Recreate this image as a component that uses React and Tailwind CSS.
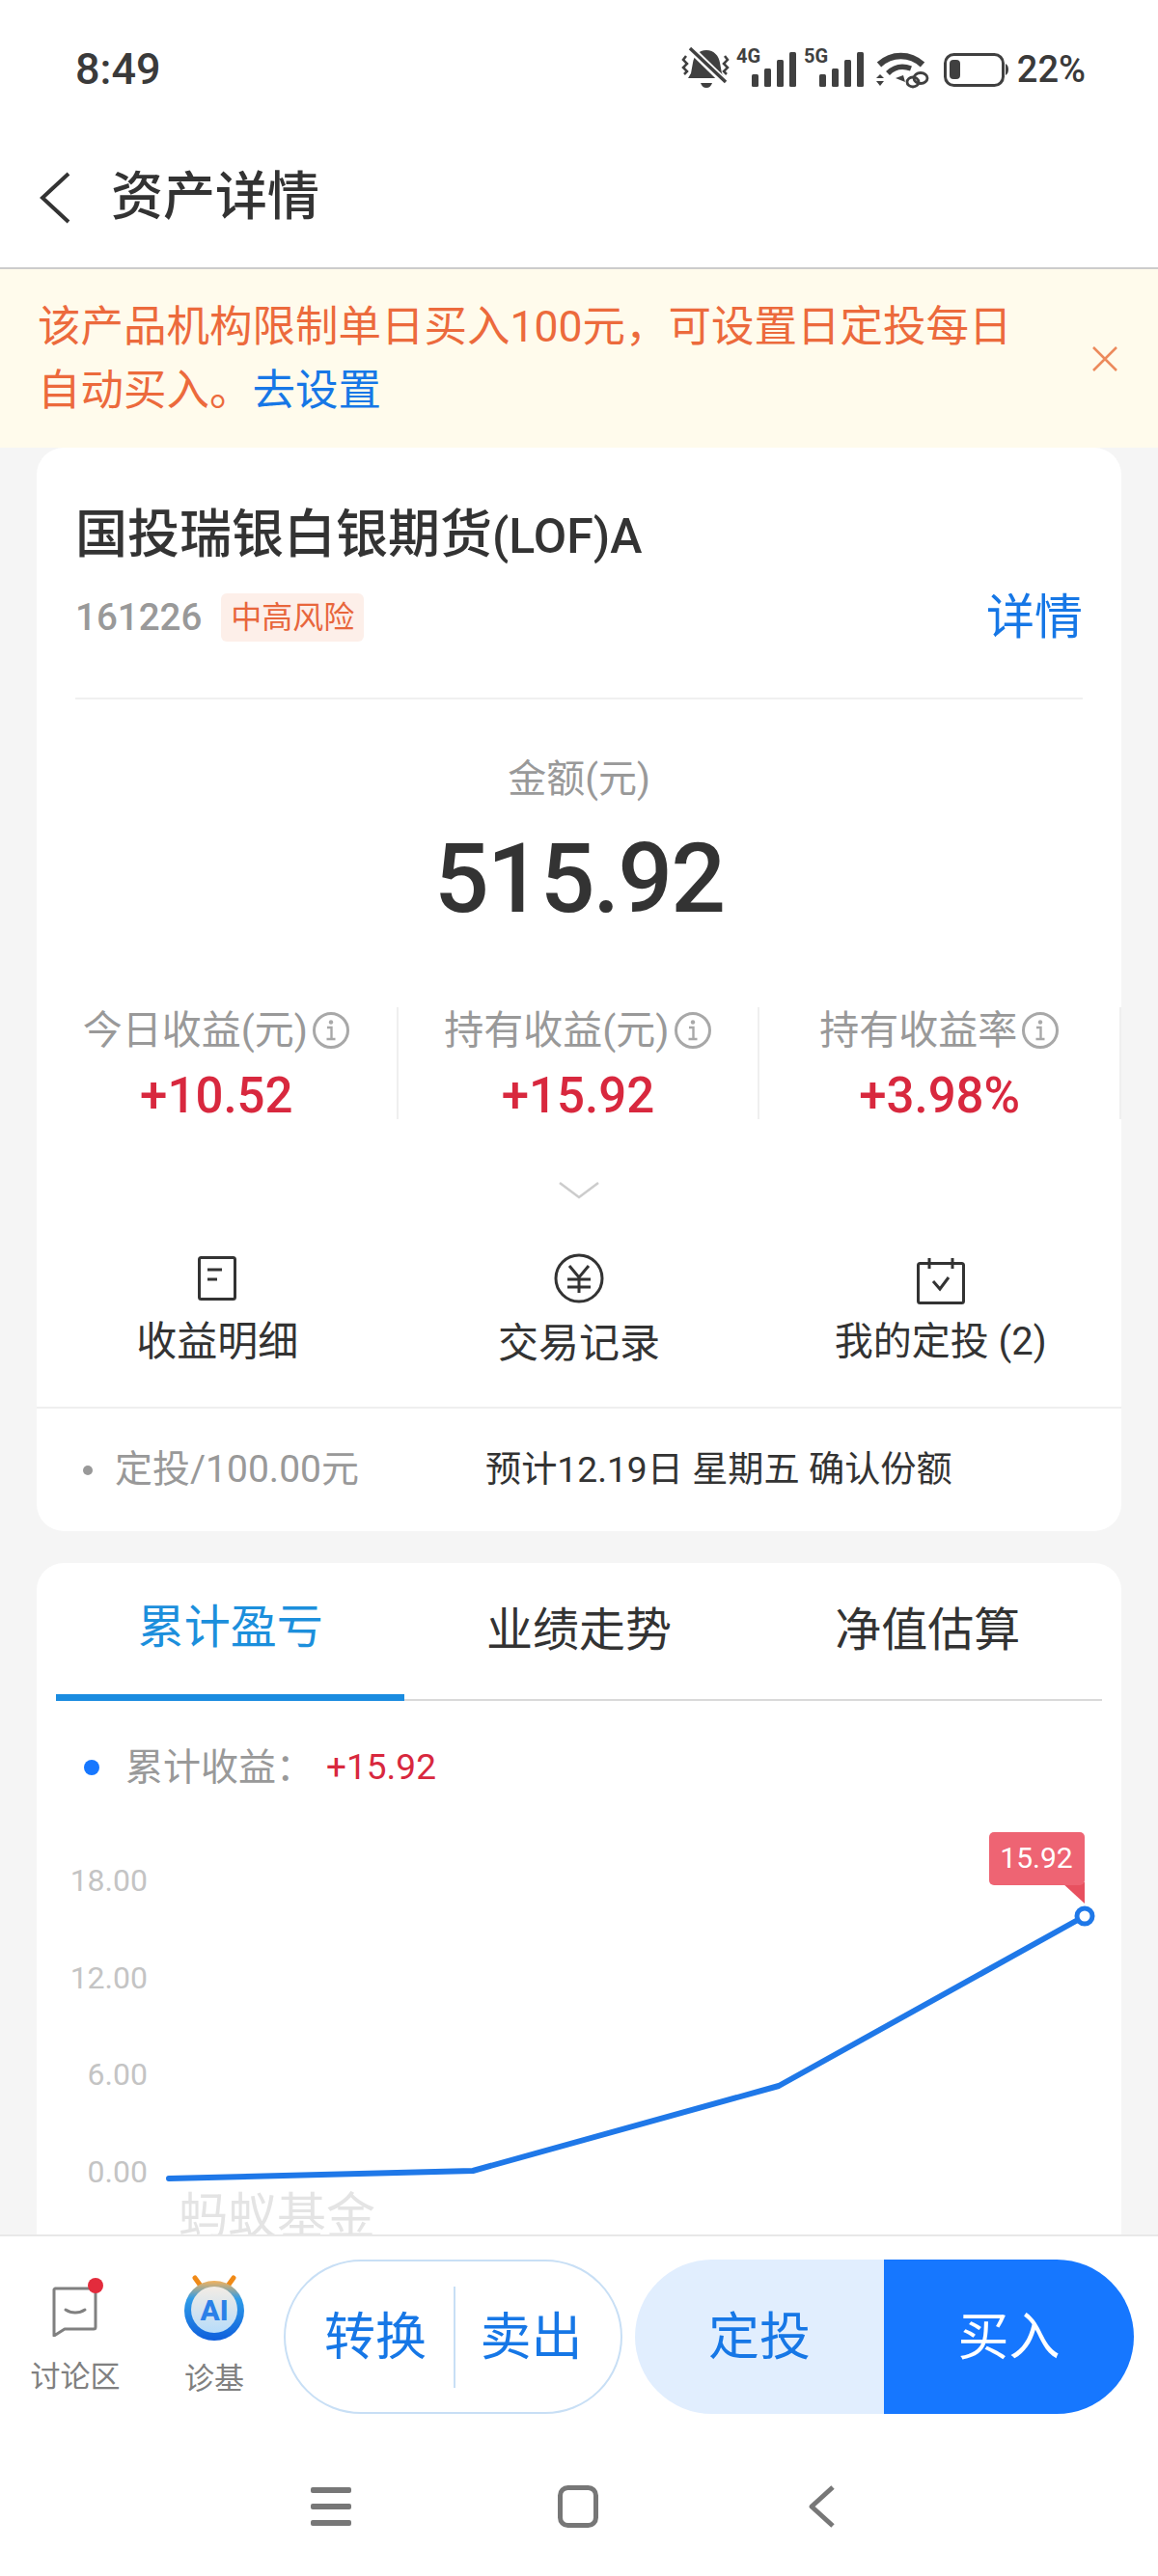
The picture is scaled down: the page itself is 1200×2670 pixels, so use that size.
const font = { fontFamily: '"Roboto", "Noto Sans CJK SC", sans-serif' };

function Bars({ x }) {
  return (
    <>
      <rect x={x} y="37" width="7" height="13" rx="1.5" />
      <rect x={x + 13} y="31" width="7" height="19" rx="1.5" />
      <rect x={x + 26} y="22" width="7" height="28" rx="1.5" />
      <rect x={x + 39} y="14" width="7" height="36" rx="1.5" />
    </>
  );
}

function StatusIcons() {
  return (
    <svg width="350" height="60" viewBox="0 0 350 60" fill="#404040" className="-mt-[4px]">
      {/* muted bell */}
      <path d="M30 12c8 0 13 6 14 13l2 11 3 5H11l3-5 2-11c1-7 6-13 14-13z" />
      <path d="M24 46h12c-1 3-3 5-6 5s-5-2-6-5z" />
      <path d="M11 8l40 39" stroke="#fff" strokeWidth="8" />
      <path d="M13 10l37 35" stroke="#404040" strokeWidth="3.5" />
      <path d="M9 18l-3 4 4 4-4 4 4 4-3 3M49 18l3 4-4 4 4 4-4 4 3 3" fill="none" stroke="#404040" strokeWidth="2.5" />
      {/* 4G */}
      <text x="61" y="25" fontSize="20" fontWeight="700" fontFamily="Roboto">4G</text>
      <Bars x={77} />
      {/* 5G */}
      <text x="131" y="25" fontSize="20" fontWeight="700" fontFamily="Roboto">5G</text>
      <Bars x={147} />
      {/* wifi */}
      <path d="M209 27c13-12 32-12 45 0" fill="none" stroke="#404040" strokeWidth="6.5" />
      <path d="M218 36c7-7 16-8 24-5" fill="none" stroke="#404040" strokeWidth="5.5" />
      <path d="M226 41l8-3 2 7z" />
      <path d="M210 37l4 4h-8zM206 44h8l-4 5z" />
      <ellipse cx="244" cy="45" rx="6" ry="5" fill="none" stroke="#404040" strokeWidth="2.8" />
      <ellipse cx="252" cy="41" rx="7" ry="5.5" fill="none" stroke="#404040" strokeWidth="2.8" />
      {/* battery */}
      <rect x="277.5" y="16.5" width="60" height="32" rx="9" fill="none" stroke="#404040" strokeWidth="3" />
      <rect x="282" y="22" width="11" height="20" rx="4" />
      <path d="M340 26c2 1 3 3 3 6s-1 5-3 6z" />
    </svg>
  );
}

function InfoIcon() {
  return (
    <svg width="40" height="40" viewBox="0 0 40 40" fill="none">
      <circle cx="20" cy="20" r="17.5" stroke="#a8a8a8" strokeWidth="3" />
      <circle cx="20" cy="11.5" r="2.2" fill="#a8a8a8" />
      <path d="M16 17h4.5v12M15.5 29h9" stroke="#a8a8a8" strokeWidth="2.4" />
    </svg>
  );
}

function Stat({ label, value }) {
  return (
    <div className="h-[116px] flex flex-col items-center border-r-2 border-[#efefef]">
      <div className="flex items-center gap-[4px] h-[48px] text-[41px] leading-[48px] text-[#999999]">
        <span>{label}</span>
        <InfoIcon />
      </div>
      <div className="mt-[14px] text-[51px] leading-[60px] font-medium text-[#d8283e]">{value}</div>
    </div>
  );
}

function Action({ icon, label, textClass }) {
  return (
    <div className="flex flex-col items-center">
      <div className="h-[52px] flex items-center justify-center">{icon}</div>
      <div className={"text-[#333333] text-[42px] leading-[56px] " + textClass}>{label}</div>
    </div>
  );
}

export default function App() {
  return (
    <div className="w-[1200px] h-[2670px] flex flex-col bg-white overflow-hidden" style={font}>
      {/* status bar */}
      <div className="h-[120px] shrink-0 flex items-start justify-between pl-[78px] pr-[75px] pt-[47px] text-[#3a3a3a]">
        <div className="text-[45px] leading-[50px] font-medium">8:49</div>
        <div className="flex items-center gap-[2px] h-[50px]">
          <StatusIcons />
          <span className="text-[38px] leading-[50px] font-medium">22%</span>
        </div>
      </div>

      {/* header */}
      <div className="h-[159px] shrink-0 flex items-center pl-[40px] pt-[13px] border-b-2 border-[#cccccc]">
        <svg width="34" height="54" viewBox="0 0 34 54" fill="none">
          <path d="M31 2L4 27l27 25" stroke="#333333" strokeWidth="4" />
        </svg>
        <div className="ml-[41px] text-[54px] leading-[66px] font-medium text-[#333333]">资产详情</div>
      </div>

      {/* notice */}
      <div className="h-[185px] shrink-0 bg-[#fffbec] flex items-center pl-[39px] pr-[41px] justify-between">
        <div className="w-[1070px] text-[44.5px] leading-[66px] text-[#ec6a3c]">
          该产品机构限制单日买入100元，可设置日定投每日
          <br />
          自动买入。<span className="text-[#1677e6]">去设置</span>
        </div>
        <svg width="28" height="28" viewBox="0 0 28 28" fill="none">
          <path d="M2 2l24 24M26 2L2 26" stroke="#ec8a5c" strokeWidth="2.5" />
        </svg>
      </div>

      <div className="flex-1 min-h-0 overflow-hidden bg-[#f5f5f5] px-[38px]">
        {/* asset card */}
        <div className="bg-white rounded-[28px] h-[1123px] flex flex-col">
          <div className="pt-[58px] px-[40px]">
            <div className="text-[54px] leading-[66px] text-[#333333] font-medium">
              国投瑞银白银期货<span className="text-[50px]">(LOF)A</span>
            </div>
            <div className="mt-[25px] h-[52px] flex items-center">
              <span className="text-[38.5px] font-medium text-[#999999]">161226</span>
              <span className="ml-[20px] h-[50px] px-[10px] rounded-[6px] bg-[#fdefe9] text-[#e8663c] text-[32px] leading-[50px]">中高风险</span>
              <span className="ml-auto text-[50px] leading-[60px] text-[#1677e6]">详情</span>
            </div>
            <div className="mt-[57px] border-b-2 border-[#f0f0f0]" />
          </div>

          <div className="mt-[58px] text-center text-[40px] leading-[50px] text-[#999999]">金额(元)</div>
          <div className="mt-[23px] text-center text-[100px] leading-[110px] tracking-[-2px] font-medium text-[#333333]">515.92</div>

          <div className="mt-[78px] grid grid-cols-3">
            <Stat label="今日收益(元)" value="+10.52" />
            <Stat label="持有收益(元)" value="+15.92" />
            <Stat label="持有收益率" value="+3.98%" />
          </div>

          <div className="mt-[65px] flex justify-center">
            <svg width="42" height="18" viewBox="0 0 42 18" fill="none">
              <path d="M1 1l20 15L41 1" stroke="#cccccc" strokeWidth="2.5" />
            </svg>
          </div>

          <div className="mt-[56px] grid grid-cols-3">
            <Action
              label="收益明细"
              textClass="mt-[12px]"
              icon={
                <svg width="40" height="46" viewBox="0 0 40 46" fill="none" stroke="#333333">
                  <rect x="1.5" y="1.5" width="37" height="43" rx="2" strokeWidth="3" />
                  <path d="M10 14h15M10 24h10" strokeWidth="3" />
                </svg>
              }
            />
            <Action
              label="交易记录"
              textClass="mt-[14px]"
              icon={
                <svg width="52" height="52" viewBox="0 0 52 52" fill="none" stroke="#333333">
                  <circle cx="26" cy="26" r="24" strokeWidth="3" />
                  <path d="M16 13l10 12 10-12M14 27h24M14 35h24M26 25v16" strokeWidth="3" />
                </svg>
              }
            />
            <Action
              label="我的定投 (2)"
              textClass="mt-[12px] !text-[40px]"
              icon={
                <svg width="50" height="50" viewBox="0 0 50 50" fill="none" stroke="#333333" className="mt-[6px]">
                  <rect x="1.5" y="6.5" width="47" height="41" rx="2" strokeWidth="3" />
                  <path d="M13 1v11M37 1v11" strokeWidth="3" />
                  <path d="M17 25l7 8 9-12" strokeWidth="3" />
                </svg>
              }
            />
          </div>

          <div className="mt-[37px] border-b-2 border-[#efefef]" />

          <div className="flex-1 flex items-center">
            <span className="ml-[48px] w-[10px] h-[10px] rounded-full bg-[#999999]" />
            <span className="ml-[23px] text-[39px] text-[#999999]">定投/100.00元</span>
            <span className="ml-[131px] text-[37.2px] text-[#333333]">预计12.19日 星期五 确认份额</span>
          </div>
        </div>

        {/* chart card */}
        <div className="mt-[33px] bg-white rounded-t-[28px] h-[760px] relative">
          <div className="mx-[20px] h-[143px] grid grid-cols-3 border-b-2 border-[#d9d9d9]">
            <div className="h-[143px] border-b-[7px] border-[#1a8ce0] flex items-center justify-center pb-[2px] text-[48px] text-[#1c8fdc]">累计盈亏</div>
            <div className="flex items-center justify-center pb-[3px] text-[48px] text-[#333333]">业绩走势</div>
            <div className="flex items-center justify-center pb-[3px] text-[48px] text-[#333333]">净值估算</div>
          </div>

          <div className="mt-[41px] flex items-center pl-[49px] h-[56px]">
            <span className="w-[16px] h-[16px] rounded-full bg-[#1677ff]" />
            <span className="ml-[27px] text-[39px] text-[#999999]">累计收益：</span>
            <span className="ml-[13px] text-[37px] text-[#d8283e]">+15.92</span>
          </div>

          <svg width="1124" height="470" viewBox="0 0 1124 470" className="block mt-[1px]" fill="none" style={font}>
            {["18.00", "12.00", "6.00", "0.00"].map((t, i) => (
              <text key={t} x="115" y={99 + i * 100.5} textAnchor="end" fontSize="32" fill="#c4c4c4">{t}</text>
            ))}
            <path d="M137 397L452 389L769 301L1086 125" stroke="#1f78e8" strokeWidth="6" strokeLinejoin="round" strokeLinecap="round" />
            <circle cx="1086" cy="125" r="8" fill="#fff" stroke="#1f78e8" strokeWidth="5" />
            <path d="M1062 90h24v22z" fill="#e8505f" />
            <rect x="987" y="38" width="99" height="55" rx="5" fill="#ee6473" />
            <text x="1036" y="75" textAnchor="middle" fontSize="30" fill="#ffffff">15.92</text>
          </svg>

          <div className="absolute left-[147px] top-[648px] text-[51px] leading-[60px] text-[#e4e4e4]">蚂蚁基金</div>
        </div>
      </div>

      {/* bottom actions */}
      <div className="h-[354px] shrink-0 bg-white border-t-2 border-[#e8e8e8]">
        <div className="h-[186px] pt-[24px] flex items-start pl-[26px]">
          <div className="w-[104px] flex flex-col items-center">
            <svg width="62" height="62" viewBox="0 0 62 62" fill="none" className="mt-[18px] ml-[4px]">
              <path d="M8 12h40a2 2 0 012 2v38a2 2 0 01-2 2H18L7 61V13a2 2 0 011-1z" stroke="#808080" strokeWidth="3" strokeLinejoin="round" />
              <path d="M19 34c6 4 14 4 20 0" stroke="#808080" strokeWidth="3" strokeLinecap="round" />
              <circle cx="50" cy="9" r="8" fill="#e32b3c" />
            </svg>
            <div className="mt-[22px] text-[31px] leading-[40px] text-[#808080]">讨论区</div>
          </div>

          <div className="ml-[40px] w-[104px] flex flex-col items-center">
            <svg width="66" height="72" viewBox="0 0 66 72" className="mt-[16px]">
              <defs>
                <linearGradient id="ring" x1="0" y1="0" x2="0" y2="1">
                  <stop offset="0" stopColor="#f5b25a" />
                  <stop offset="0.3" stopColor="#2f9ce8" />
                  <stop offset="1" stopColor="#0f5fdc" />
                </linearGradient>
                <linearGradient id="inner" x1="0" y1="0" x2="0" y2="1">
                  <stop offset="0" stopColor="#f3ece4" />
                  <stop offset="1" stopColor="#b7dcfa" />
                </linearGradient>
              </defs>
              <path d="M13 3l8 11M53 3l-8 11" stroke="#f08a17" strokeWidth="5" strokeLinecap="round" />
              <circle cx="33" cy="37" r="31" fill="url(#ring)" />
              <circle cx="33" cy="36" r="24" fill="url(#inner)" />
              <text x="33" y="47" textAnchor="middle" fontSize="30" fontWeight="800" fill="#2a80e8" fontFamily="Roboto">AI</text>
            </svg>
            <div className="mt-[16px] text-[31px] leading-[40px] text-[#808080]">诊基</div>
          </div>

          <div className="ml-[20px] w-[351px] h-[160px] rounded-full border-2 border-[#c8dff5] flex items-center text-[#1677e6] text-[53px]">
            <div className="w-[174px] text-center pl-[12px] pt-[4px]">转换</div>
            <div className="w-[2px] h-[105px] bg-[#c8dff5]" />
            <div className="flex-1 text-center pr-[14px] pt-[4px]">卖出</div>
          </div>

          <div className="ml-[13px] w-[517px] h-[160px] rounded-full overflow-hidden flex text-[53px]">
            <div className="w-[258px] bg-[#e1eefe] text-[#1677e6] flex items-center justify-center pt-[4px]">定投</div>
            <div className="flex-1 bg-[#1677ff] text-white flex items-center justify-center pt-[4px]">买入</div>
          </div>
        </div>

        {/* system nav */}
        <div className="mt-[72px] flex items-center justify-between pl-[322px] pr-[335px] h-[44px]">
          <svg width="42" height="40" viewBox="0 0 42 40" fill="#777777">
            <rect y="0" width="42" height="6" rx="2" />
            <rect y="17" width="42" height="6" rx="2" />
            <rect y="34" width="42" height="6" rx="2" />
          </svg>
          <svg width="42" height="44" viewBox="0 0 42 44" fill="none" className="-ml-[4px]">
            <rect x="2.5" y="2.5" width="37" height="39" rx="8" stroke="#777777" strokeWidth="5" />
          </svg>
          <svg width="28" height="44" viewBox="0 0 28 44" fill="none">
            <path d="M26 2L4 22l22 20" stroke="#777777" strokeWidth="5" strokeLinejoin="round" />
          </svg>
        </div>
      </div>
    </div>
  );
}
